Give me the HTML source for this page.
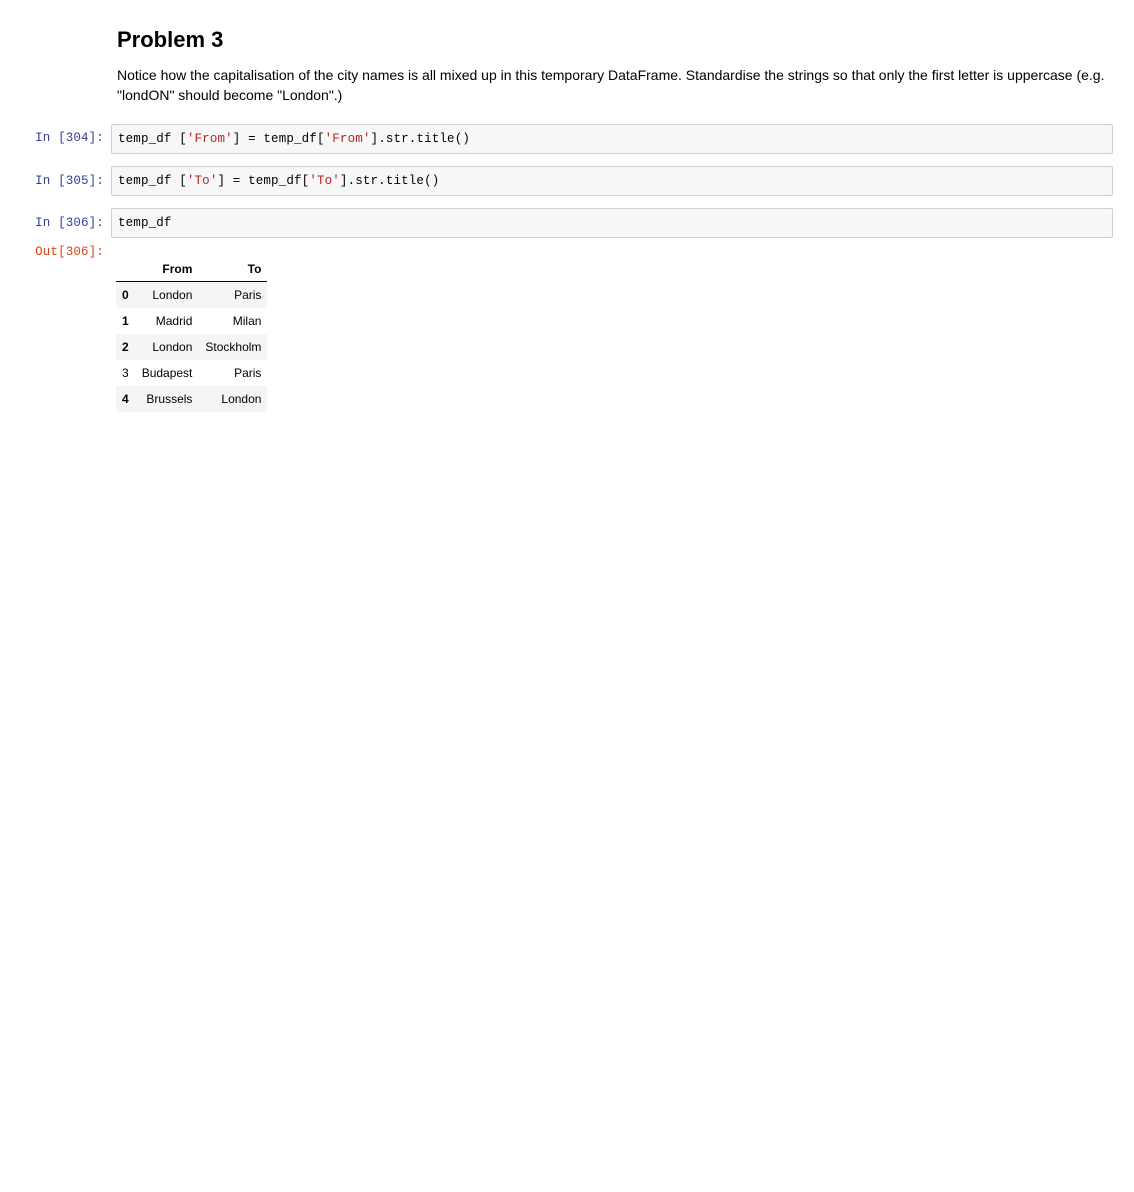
<!DOCTYPE html>
<html><head><style>
body{margin:0;background:#fff;width:1134px;height:1192px;position:relative;font-family:"Liberation Sans",Arial,sans-serif;}
h2{position:absolute;left:117px;top:27px;margin:0;font-size:22px;font-weight:bold;color:#000;}
p.t{position:absolute;left:117px;top:65px;margin:0;width:1000px;font-size:14px;line-height:20px;color:#000;}
.prompt{position:absolute;left:0;width:104px;text-align:right;font-family:"Liberation Mono",monospace;font-size:12.5px;letter-spacing:0.15px;color:#303f9f;}
.out{color:#d84315;}
.cell{position:absolute;left:111px;width:994px;height:28px;border:1px solid #cfcfcf;background:#f7f7f7;border-radius:2px;font-family:"Liberation Mono",monospace;font-size:12.5px;letter-spacing:0.15px;line-height:28px;padding-left:6px;box-sizing:content-box;color:#000;}
.s{color:#ba2121;}
table{position:absolute;left:116px;top:256px;border-collapse:collapse;font-size:12px;color:#000;}
th,td{padding:0 6px;height:26px;text-align:right;}
td{padding:0 6px 0 7px;}
thead th{border-bottom:1px solid #000;height:25px;}
tbody tr:nth-child(odd){background:#f5f5f5;}
.n{font-weight:normal;}
</style></head><body>
<h2>Problem 3</h2>
<p class="t">Notice how the capitalisation of the city names is all mixed up in this temporary DataFrame. Standardise the strings so that only the first letter is uppercase (e.g. "londON" should become "London".)</p>
<div class="prompt" style="top:131px">In [304]:</div>
<div class="cell" style="top:124px">temp_df [<span class="s">'From'</span>] = temp_df[<span class="s">'From'</span>].str.title()</div>
<div class="prompt" style="top:174px">In [305]:</div>
<div class="cell" style="top:166px">temp_df [<span class="s">'To'</span>] = temp_df[<span class="s">'To'</span>].str.title()</div>
<div class="prompt" style="top:216px">In [306]:</div>
<div class="cell" style="top:208px">temp_df</div>
<div class="prompt out" style="top:245px">Out[306]:</div>
<table>
<thead><tr><th></th><th>From</th><th>To</th></tr></thead>
<tbody>
<tr><th>0</th><td>London</td><td>Paris</td></tr>
<tr><th>1</th><td>Madrid</td><td>Milan</td></tr>
<tr><th>2</th><td>London</td><td>Stockholm</td></tr>
<tr><th class="n">3</th><td>Budapest</td><td>Paris</td></tr>
<tr><th>4</th><td>Brussels</td><td>London</td></tr>
</tbody></table>
</body></html>
